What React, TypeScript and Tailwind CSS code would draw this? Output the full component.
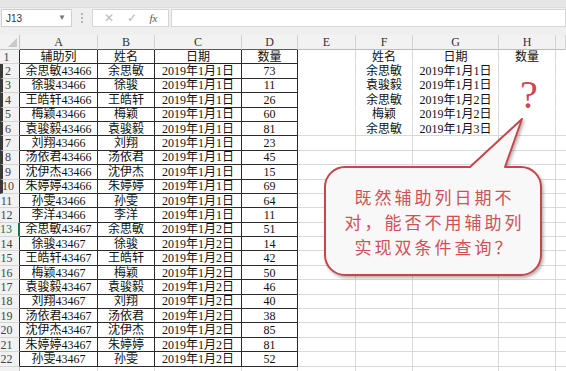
const names1 = ["余思敏", "徐骏", "王皓轩", "梅颖", "袁骏毅", "刘翔", "汤依君", "沈伊杰", "朱婷婷", "孙雯", "李洋"];
const qty1 = ["73", "11", "26", "60", "81", "23", "45", "15", "69", "64", "11"];
const names2 = ["余思敏", "徐骏", "王皓轩", "梅颖", "袁骏毅", "刘翔", "汤依君", "沈伊杰", "朱婷婷", "孙雯"];
const qty2 = ["51", "14", "42", "50", "46", "40", "38", "85", "81", "52"];

const data: string[][] = [
  ["辅助列", "姓名", "日期", "数量"],
  ...names1.map((n, i) => [n + "43466", n, "2019年1月1日", qty1[i]]),
  ...names2.map((n, i) => [n + "43467", n, "2019年1月2日", qty2[i]]),
];

const lookup: string[][] = [
  ["", "姓名", "日期", "数量"],
  ["", "余思敏", "2019年1月1日", ""],
  ["", "袁骏毅", "2019年1月1日", ""],
  ["", "余思敏", "2019年1月2日", ""],
  ["", "梅颖", "2019年1月2日", ""],
  ["", "余思敏", "2019年1月3日", ""],
];

function FormulaBar() {
  return (
    <div className="h-[35px] bg-[#efefef]">
      <div className="h-[8px] bg-[#e6e6e6] border-b border-[#dcdcdc]" />
      <div className="flex items-center h-[18px] mt-[1px] font-['Liberation_Sans',sans-serif]">
        <div className="ml-[1px] w-[71px] h-full bg-white border border-[#cfcfcf] flex items-center justify-between pl-[4px] pr-[5px]">
          <span className="text-[10px] text-[#333]">J13</span>
          <span className="text-[8px] text-[#777]">▼</span>
        </div>
        <div className="w-[20px] flex flex-col items-center gap-[2px]">
          <span className="w-[2px] h-[2px] bg-[#b5b5b5]" />
          <span className="w-[2px] h-[2px] bg-[#b5b5b5]" />
          <span className="w-[2px] h-[2px] bg-[#b5b5b5]" />
        </div>
        <div className="w-[77px] h-full bg-white border border-[#d6d6d6] flex items-center justify-around px-[4px] text-[#b8b8b8]">
          <span className="text-[12px] leading-none">✕</span>
          <span className="text-[12px] leading-none">✓</span>
          <span className="text-[11px] italic text-[#555] font-['Liberation_Serif',serif]">fx</span>
        </div>
        <div className="ml-[2px] flex-1 h-full bg-white border border-[#d6d6d6]" />
      </div>
    </div>
  );
}

function HeaderRow() {
  const cols = ["A", "B", "C", "D", "E", "F", "G", "H", ""];
  const widths = ["w-[78px]", "w-[57px]", "w-[87px]", "w-[56px]", "w-[58px]", "w-[57px]", "w-[86px]", "w-[57px]", "w-[10px]"];
  return (
    <div className="flex h-[15px] bg-[#f2f2f2] text-[#333]">
      <div className="w-[20px] shrink-0 border-r border-b border-[#c4c4c4] relative">
        <div className="absolute right-[2px] bottom-[2px] w-0 h-0 border-l-[9px] border-l-transparent border-b-[9px] border-b-[#c9c9c9]" />
      </div>
      {cols.map((c, i) => (
        <div
          key={i}
          className={`${widths[i]} shrink-0 flex items-center justify-center border-r border-[#d2d2d2] border-b ${i < 4 ? "border-b-[#5a5a5a]" : "border-b-[#bdbdbd]"} text-[12px] leading-none`}
        >
          {c}
        </div>
      ))}
    </div>
  );
}

function DataRow({ n }: { n: number }) {
  const d = data[n - 1] ?? ["", "", "", ""];
  const lk = lookup[n - 1] ?? ["", "", "", ""];
  const inTable = n <= 22;
  const dark = inTable ? "border-[#2b2b2b]" : "border-[#d9d9d9]";
  const light = n <= 5 ? "border-r-[#d9d9d9] border-b-transparent" : "border-[#d9d9d9]";
  const head =
    n === 13
      ? "border-r-2 border-r-[#217346] text-[#217346] bg-[#e2e2e2]"
      : inTable
      ? "border-r border-r-[#2b2b2b] text-[#444]"
      : "border-r border-r-[#c4c4c4] text-[#444]";
  const edge = n >= 2 && n <= 10 ? "border-l-[3px] border-l-[#3a3a3a]" : "";
  return (
    <div className="flex h-[14.4px] text-[12px] leading-none text-[#111]">
      <div className={`w-[20px] shrink-0 flex items-center justify-center pr-[6px] bg-[#f2f2f2] border-b border-b-[#d4d4d4] ${head} ${edge}`}>
        {inTable ? n : ""}
      </div>
      <div className={`w-[78px] shrink-0 flex items-center justify-center border-r border-b ${dark}`}>{d[0]}</div>
      <div className={`w-[57px] shrink-0 flex items-center justify-center border-r border-b ${dark}`}>{d[1]}</div>
      <div className={`w-[87px] shrink-0 flex items-center justify-center border-r border-b ${dark}`}>{d[2]}</div>
      <div className={`w-[56px] shrink-0 flex items-center justify-center border-r border-b ${dark}`}>{d[3]}</div>
      <div className={`w-[58px] shrink-0 flex items-center justify-center border-r border-b ${light}`}>{lk[0]}</div>
      <div className={`w-[57px] shrink-0 flex items-center justify-center border-r border-b ${light}`}>{lk[1]}</div>
      <div className={`w-[86px] shrink-0 flex items-center justify-center border-r border-b ${light}`}>{lk[2]}</div>
      <div className={`w-[57px] shrink-0 flex items-center justify-center border-r border-b ${light}`}>{lk[3]}</div>
      <div className={`w-[10px] shrink-0 border-b ${n <= 5 ? "border-b-transparent" : "border-b-[#d9d9d9]"}`} />
    </div>
  );
}

function Callout() {
  return (
    <>
      <svg className="absolute left-0 top-0" width="566" height="371" viewBox="0 0 566 371">
        <defs>
          <filter id="sh" x="-10%" y="-10%" width="130%" height="130%">
            <feDropShadow dx="1.5" dy="2" stdDeviation="1.5" floodColor="#000" floodOpacity="0.3" />
          </filter>
        </defs>
        <path
          d="M345 167 L470 167 L522 119 L505 167 L521 167 A20 20 0 0 1 541 187 L541 255 A20 20 0 0 1 521 275 L345 275 A20 20 0 0 1 325 255 L325 187 A20 20 0 0 1 345 167 Z"
          fill="#f8f8f8"
          stroke="#c4464c"
          strokeWidth="2"
          strokeLinejoin="round"
          filter="url(#sh)"
        />
      </svg>
      <div className="absolute left-[325px] top-[167px] w-[216px] h-[108px] flex flex-col items-center justify-center pl-[3px] text-[17px] leading-[25px] tracking-[3px] text-[#d0505a] font-['Noto_Sans_CJK_SC',sans-serif]">
        <div>既然辅助列日期不</div>
        <div>对，能否不用辅助列</div>
        <div>实现双条件查询？</div>
      </div>
      <div className="absolute left-[520px] top-[75px] text-[40px] leading-[40px] text-[#d4434d] font-['Liberation_Serif',serif]">?</div>
    </>
  );
}

export default function App() {
  const rows = Array.from({ length: 23 }, (_, i) => i + 1);
  return (
    <div className="relative w-[566px] h-[371px] overflow-hidden bg-white font-['Liberation_Serif','Noto_Sans_CJK_SC',serif]">
      <FormulaBar />
      <HeaderRow />
      {rows.map((n) => (
        <DataRow key={n} n={n} />
      ))}
      <Callout />
    </div>
  );
}
